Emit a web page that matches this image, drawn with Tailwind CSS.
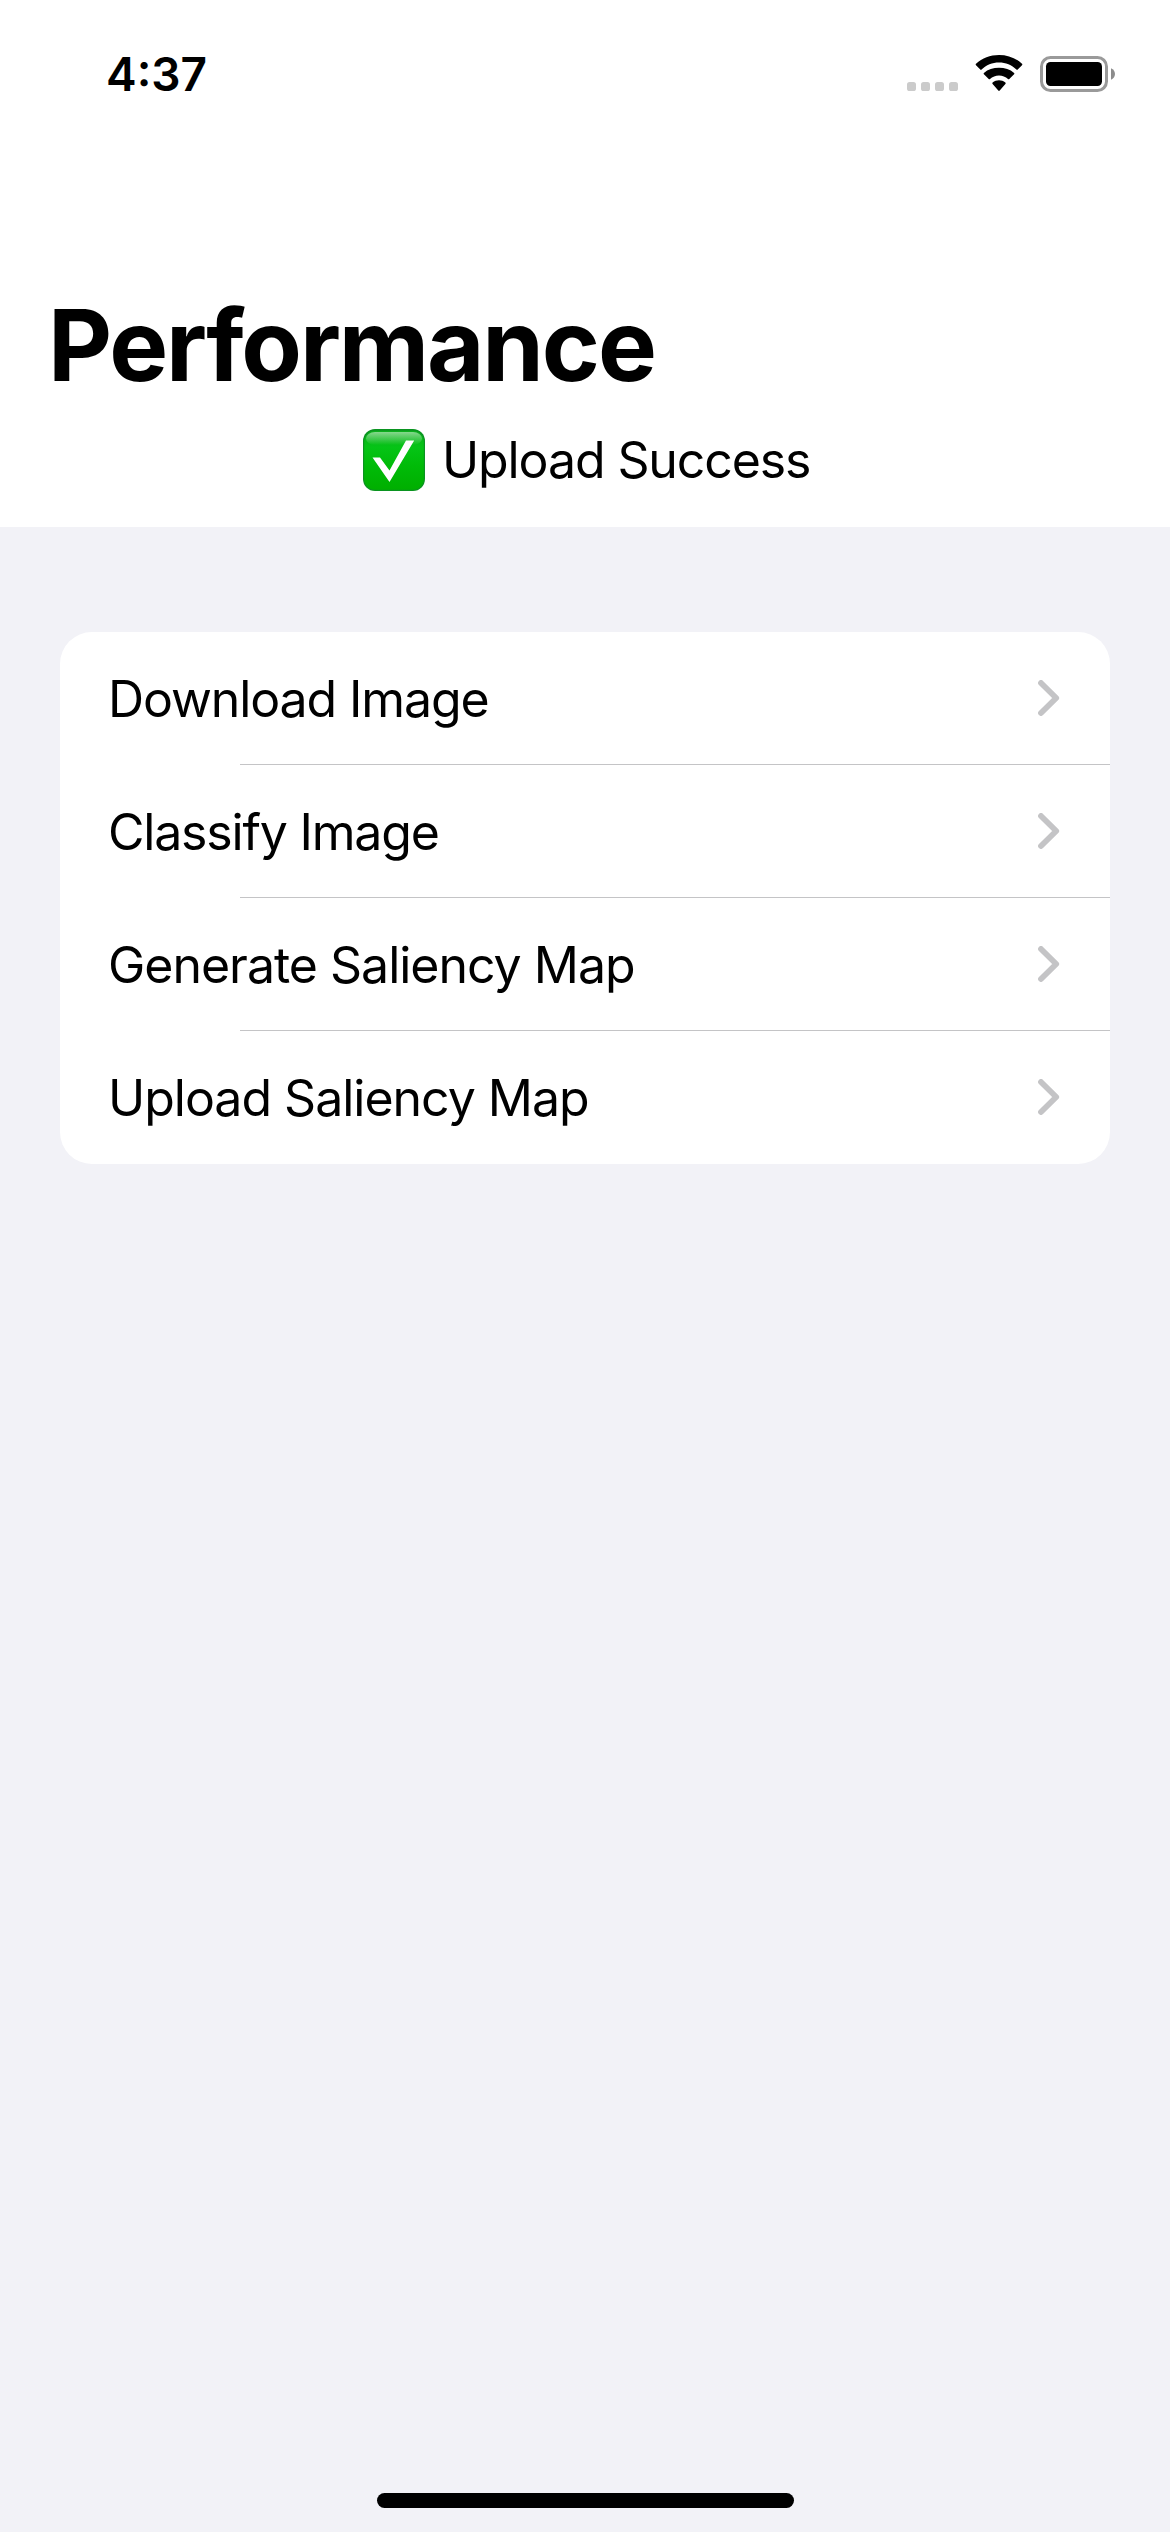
<!DOCTYPE html>
<html lang="en">
<head>
<meta charset="utf-8">
<title>Performance</title>
<script src="https://cdn.jsdelivr.net/npm/@tailwindcss/browser@4"></script>
</head>
<body class="bg-[#f2f2f7]">
<div class="flex h-[2532px] w-[1170px] flex-col overflow-hidden bg-[#f2f2f7] font-['Inter',sans-serif] text-black">
  <header class="flex h-[527px] shrink-0 flex-col bg-white">
    <!-- Status bar -->
    <div class="flex h-[148px] items-center justify-between pr-[55px] pl-[106px]">
      <span class="text-[46px] leading-[46px] font-semibold">4:37</span>
      <div class="flex items-center">
        <svg class="mb-[2px] h-[36px] w-[51px]" viewBox="0 0 51 36" fill="#cbcbcb">
          <rect x="0" y="27" width="9" height="9" rx="2.6"/>
          <rect x="14" y="27" width="9" height="9" rx="2.6"/>
          <rect x="28" y="27" width="9" height="9" rx="2.6"/>
          <rect x="42" y="27" width="9" height="9" rx="2.6"/>
        </svg>
        <svg class="mb-[2px] ml-[17px] h-[36px] w-[48px]" viewBox="0 0 48 36">
          <path d="M24 7.600c6.700 0 12.800 2.600 17.400 7 .4.4.9.4 1.300 0l4.300-4.400a1 1 0 0 0 0-1.400C40.800 3 32.800 0 24 0S7.200 3 1 8.800a1 1 0 0 0 0 1.400l4.300 4.400c.4.4.9.4 1.300 0C11.200 10.200 17.300 7.600 24 7.600z"/>
          <path d="M24 20.500c3.400 0 6.600 1.300 9 3.500.4.4.9.4 1.300 0l4.800-4.700a1 1 0 0 0 0-1.400C35.100 14.300 29.800 12.700 24 12.700S12.900 14.300 8.900 17.900a1 1 0 0 0 0 1.400l4.800 4.700c.4.4.9.4 1.300 0 2.400-2.200 5.600-3.500 9-3.500z"/>
          <path d="M30.400 27.500a1 1 0 0 1 0 1.400l-5.700 6.600c-.4.5-1 .5-1.400 0l-5.700-6.600a1 1 0 0 1 0-1.400c3.700-3.100 9.100-3.100 12.800 0z"/>
        </svg>
        <svg class="ml-[17px] h-[36px] w-[75px]" viewBox="0 0 75 36">
          <rect x="1.500" y="1.500" width="65" height="33" rx="9" fill="none" stroke="#9a9a9a" stroke-width="3"/>
          <rect x="6" y="6" width="56" height="24" rx="4.500"/>
          <path d="M71 12.200c2.400 1 4 3.300 4 5.800s-1.600 4.800-4 5.800z" fill="#8c8c8c"/>
        </svg>
      </div>
    </div>
    <!-- Large title -->
    <h1 class="mt-[137px] pl-[48px] text-[99px] leading-[120px] font-bold tracking-[-2.13px]">Performance</h1>
    <!-- Upload status -->
    <div class="mt-[25px] flex h-[60px] items-center pl-[363px]">
      <svg class="h-[62px] w-[62px]" viewBox="0 0 62 62">
        <defs>
          <linearGradient id="face" x1="0" y1="0" x2="0" y2="1">
            <stop offset="0" stop-color="#0cae1c"/>
            <stop offset=".28" stop-color="#05c416"/>
            <stop offset=".6" stop-color="#00bb08"/>
            <stop offset="1" stop-color="#00af00"/>
          </linearGradient>
          <linearGradient id="gloss" x1="0" y1="0" x2="0" y2="1">
            <stop offset="0" stop-color="#fff" stop-opacity=".5"/>
            <stop offset="1" stop-color="#fff" stop-opacity="0"/>
          </linearGradient>
        </defs>
        <rect width="62" height="62" rx="12" fill="#0a9420"/>
        <rect x="1.200" y="1.800" width="59.600" height="59" rx="11" fill="url(#face)"/>
        <rect x="3" y="3" width="56" height="13" rx="9" fill="url(#gloss)"/>
        <path d="M9.500 28.500h7.500L26.500 41.500 43 11.500h8.200L26.500 53z" fill="#fff"/>
      </svg>
      <p class="ml-[17px] text-[50px] leading-[60px] tracking-[-1.11px]">Upload Success</p>
    </div>
  </header>

  <!-- Tests -->
  <main class="flex grow flex-col px-[60px] pt-[105px]">
    <ul class="flex flex-col overflow-hidden rounded-[32px] bg-white">
      <li class="flex h-[133px] flex-col">
        <div class="flex grow items-center justify-between pr-[50px] pl-[48px]">
          <span class="pt-[2px] text-[50px] leading-[60px] tracking-[-1.11px]">Download Image</span>
          <svg class="h-[36px] w-[22px]" viewBox="0 0 22 36" fill="none" stroke="#c4c4c6" stroke-width="5.800" stroke-linecap="round" stroke-linejoin="round"><path d="M3 3 18.200 18 3 33"/></svg>
        </div>
        <div class="ml-[180px] h-px bg-[#c4c4c6]"></div>
      </li>
      <li class="flex h-[133px] flex-col">
        <div class="flex grow items-center justify-between pr-[50px] pl-[48px]">
          <span class="pt-[2px] text-[50px] leading-[60px] tracking-[-1.2px]">Classify Image</span>
          <svg class="h-[36px] w-[22px]" viewBox="0 0 22 36" fill="none" stroke="#c4c4c6" stroke-width="5.800" stroke-linecap="round" stroke-linejoin="round"><path d="M3 3 18.200 18 3 33"/></svg>
        </div>
        <div class="ml-[180px] h-px bg-[#c4c4c6]"></div>
      </li>
      <li class="flex h-[133px] flex-col">
        <div class="flex grow items-center justify-between pr-[50px] pl-[48px]">
          <span class="pt-[2px] text-[50px] leading-[60px] tracking-[-1.01px]">Generate Saliency Map</span>
          <svg class="h-[36px] w-[22px]" viewBox="0 0 22 36" fill="none" stroke="#c4c4c6" stroke-width="5.800" stroke-linecap="round" stroke-linejoin="round"><path d="M3 3 18.200 18 3 33"/></svg>
        </div>
        <div class="ml-[180px] h-px bg-[#c4c4c6]"></div>
      </li>
      <li class="flex h-[133px] flex-col">
        <div class="flex grow items-center justify-between pr-[50px] pb-px pl-[48px]">
          <span class="pt-[2px] text-[50px] leading-[60px] tracking-[-1.01px]">Upload Saliency Map</span>
          <svg class="h-[36px] w-[22px]" viewBox="0 0 22 36" fill="none" stroke="#c4c4c6" stroke-width="5.800" stroke-linecap="round" stroke-linejoin="round"><path d="M3 3 18.200 18 3 33"/></svg>
        </div>
      </li>
    </ul>
  </main>

  <!-- Home indicator -->
  <footer class="flex justify-center pb-[24px]">
    <div class="h-[15px] w-[417px] rounded-full bg-black"></div>
  </footer>
</div>
</body>
</html>
